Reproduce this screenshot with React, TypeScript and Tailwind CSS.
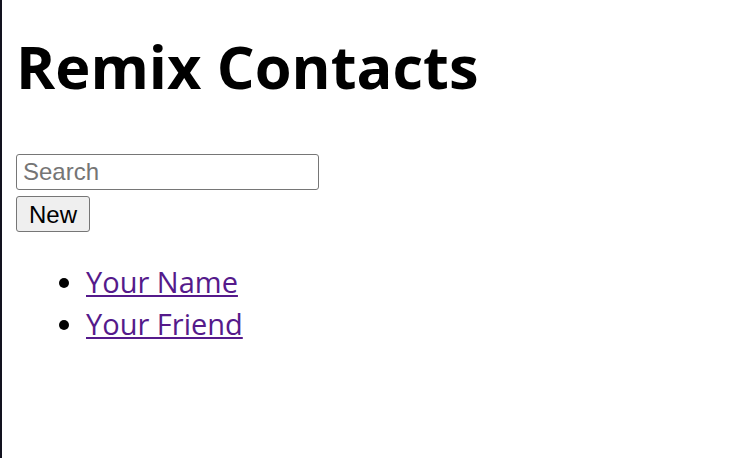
export default function App() {
  const contacts = ['Your Name', 'Your Friend']

  return (
    <div className="min-h-screen border-l-2 border-[#12121f] bg-white pl-[14px] font-['Open_Sans','Noto_Sans_CJK_JP',sans-serif]">
      <h1 className="pt-[30px] text-[59.5px] font-bold leading-[72px] text-black">Remix Contacts</h1>

      <div className="mt-[52px] flex flex-col items-start gap-[6px]">
        <input
          type="search"
          placeholder="Search"
          className="h-[36px] w-[303px] rounded-[3px] border border-[#767676] px-[6px] font-['Liberation_Sans',Arial,sans-serif] text-[24px] text-black placeholder:text-[#757575] outline-none"
        />
        <button className="h-[36px] w-[74px] rounded-[3px] border border-[#767676] bg-[#efefef] font-['Liberation_Sans',Arial,sans-serif] text-[24px] text-black">
          New
        </button>
      </div>

      <ul className="mt-[29px] list-disc pl-[70px] text-[29px] leading-[42px] text-black">
        {contacts.map((name) => (
          <li key={name}>
            <a href="#" className="text-[#551a8b] underline">
              {name}
            </a>
          </li>
        ))}
      </ul>
    </div>
  )
}
